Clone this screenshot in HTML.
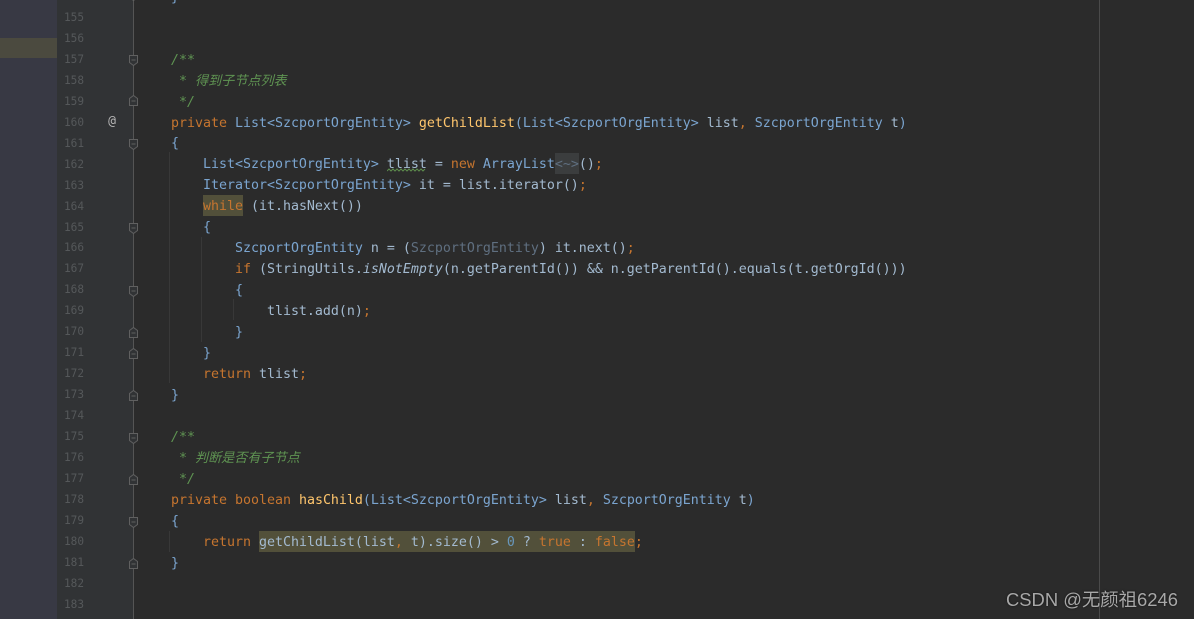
<!DOCTYPE html>
<html><head><meta charset="utf-8"><style>
html,body{margin:0;padding:0;width:1194px;height:619px;overflow:hidden;background:#2b2b2b}
.abs{position:absolute}
pre{margin:0;position:absolute;font-family:"DejaVu Sans Mono","Liberation Mono","Noto Sans CJK SC",monospace;white-space:pre}
#code{left:171px;top:-12.2px;font-size:13.29px;line-height:20.96px;color:#a3bad0}
#nums{left:64px;top:8px;font-size:11.1px;line-height:20.96px;color:#55585a}
.k{color:#c6752f}.t{color:#7ba5d0}.m{color:#ffc66d}.c{color:#5f9452;font-style:italic}.n{color:#6897bb}
.z{font-family:"Noto Sans CJK SC",sans-serif;font-size:13.1px;line-height:0}
.g{color:#5f6f80}
.d{color:#7ba5d0}
</style></head><body>
<div class="abs" style="left:0;top:0;width:57px;height:619px;background:#383944"></div>
<div class="abs" style="left:0;top:38px;width:57px;height:20px;background:#4b4a3f"></div>
<div class="abs" style="left:57px;top:0;width:76px;height:619px;background:#313335"></div>
<div class="abs" style="left:133px;top:0;width:1px;height:619px;background:#555"></div>
<div class="abs" style="left:1099px;top:0;width:1px;height:619px;background:#4a4a4a"></div>
<div class="abs" style="left:169px;top:152px;width:1px;height:231px;background:#383838"></div>
<div class="abs" style="left:201px;top:237px;width:1px;height:105px;background:#383838"></div>
<div class="abs" style="left:233px;top:299px;width:1px;height:21px;background:#383838"></div>
<div class="abs" style="left:169px;top:531px;width:1px;height:21px;background:#383838"></div>
<div class="abs" style="left:203px;top:195px;width:40px;height:21px;background:#52503a"></div>
<div class="abs" style="left:555px;top:153px;width:24px;height:21px;background:#3b3d3e"></div>
<div class="abs" style="left:259px;top:531px;width:376px;height:21px;background:#52503a"></div>
<svg class="abs" style="left:387px;top:168px" width="41" height="6"><path d="M0 3 l2 -2 l2 2 l2 -2 l2 2 l2 -2 l2 2 l2 -2 l2 2 l2 -2 l2 2 l2 -2 l2 2 l2 -2 l2 2 l2 -2 l2 2 l2 -2 l2 2 l2 -2" fill="none" stroke="#5c8a4c" stroke-width="1"/></svg>
<div class="abs" style="left:106px;top:114px;width:12px;text-align:center;font:13px/16px 'DejaVu Sans Mono',monospace;color:#b5b5b5">@</div>
<svg class="abs" style="left:0;top:0" width="140" height="619" fill="#313335" stroke="#606060" stroke-width="1">
<path d="M129.5 -9.5h8v7l-4 3l-4 -3z"/>
<path d="M129.5 55.5h8v7l-4 3l-4 -3z"/><path d="M131.5 60h4"/>
<path d="M129.5 105.5h8v-7l-4 -3l-4 3z"/><path d="M131.5 101h4"/>
<path d="M129.5 139.5h8v7l-4 3l-4 -3z"/><path d="M131.5 144h4"/>
<path d="M129.5 223.5h8v7l-4 3l-4 -3z"/><path d="M131.5 228h4"/>
<path d="M129.5 286.5h8v7l-4 3l-4 -3z"/><path d="M131.5 291h4"/>
<path d="M129.5 337.5h8v-7l-4 -3l-4 3z"/><path d="M131.5 333h4"/>
<path d="M129.5 358.5h8v-7l-4 -3l-4 3z"/><path d="M131.5 354h4"/>
<path d="M129.5 400.5h8v-7l-4 -3l-4 3z"/><path d="M131.5 396h4"/>
<path d="M129.5 433.5h8v7l-4 3l-4 -3z"/><path d="M131.5 438h4"/>
<path d="M129.5 484.5h8v-7l-4 -3l-4 3z"/><path d="M131.5 480h4"/>
<path d="M129.5 517.5h8v7l-4 3l-4 -3z"/><path d="M131.5 522h4"/>
<path d="M129.5 568.5h8v-7l-4 -3l-4 3z"/><path d="M131.5 564h4"/>
</svg>
<pre id="nums">155
156
157
158
159
160
161
162
163
164
165
166
167
168
169
170
171
172
173
174
175
176
177
178
179
180
181
182
183</pre>
<pre id="code"><span class="d">}</span>


<span class="c">/**</span>
<span class="c"> * <span class="z">得到子节点列表</span></span>
<span class="c"> */</span>
<span class="k">private</span> <span class="t">List&lt;SzcportOrgEntity&gt;</span> <span class="m">getChildList</span><span class="d">(</span><span class="t">List&lt;SzcportOrgEntity&gt;</span> list<span class="k">,</span> <span class="t">SzcportOrgEntity</span> t<span class="d">)</span>
<span class="d">{</span>
    <span class="t">List&lt;SzcportOrgEntity&gt;</span> tlist = <span class="k">new</span> <span class="t">ArrayList</span><span class="g">&lt;~&gt;</span>()<span class="k">;</span>
    <span class="t">Iterator&lt;SzcportOrgEntity&gt;</span> it = list.iterator()<span class="k">;</span>
    <span class="k">while</span> (it.hasNext())
    <span class="d">{</span>
        <span class="t">SzcportOrgEntity</span> n = (<span class="g">SzcportOrgEntity</span>) it.next()<span class="k">;</span>
        <span class="k">if</span> (StringUtils.<span style="font-style:italic">isNotEmpty</span>(n.getParentId()) &amp;&amp; n.getParentId().equals(t.getOrgId()))
        <span class="d">{</span>
            tlist.add(n)<span class="k">;</span>
        <span class="d">}</span>
    <span class="d">}</span>
    <span class="k">return</span> tlist<span class="k">;</span>
<span class="d">}</span>

<span class="c">/**</span>
<span class="c"> * <span class="z">判断是否有子节点</span></span>
<span class="c"> */</span>
<span class="k">private boolean</span> <span class="m">hasChild</span><span class="d">(</span><span class="t">List&lt;SzcportOrgEntity&gt;</span> list<span class="k">,</span> <span class="t">SzcportOrgEntity</span> t<span class="d">)</span>
<span class="d">{</span>
    <span class="k">return</span> getChildList(list<span class="k">,</span> t).size() &gt; <span class="n">0</span> ? <span class="k">true</span> : <span class="k">false;</span>
<span class="d">}</span></pre>
<div class="abs" style="left:1006px;top:588px;font:18.4px/24px 'Liberation Sans','Noto Sans CJK SC',sans-serif;color:#a8a8a8;white-space:nowrap;text-shadow:0 0 2px rgba(0,0,0,.6)">CSDN @无颜祖6246</div>
</body></html>
